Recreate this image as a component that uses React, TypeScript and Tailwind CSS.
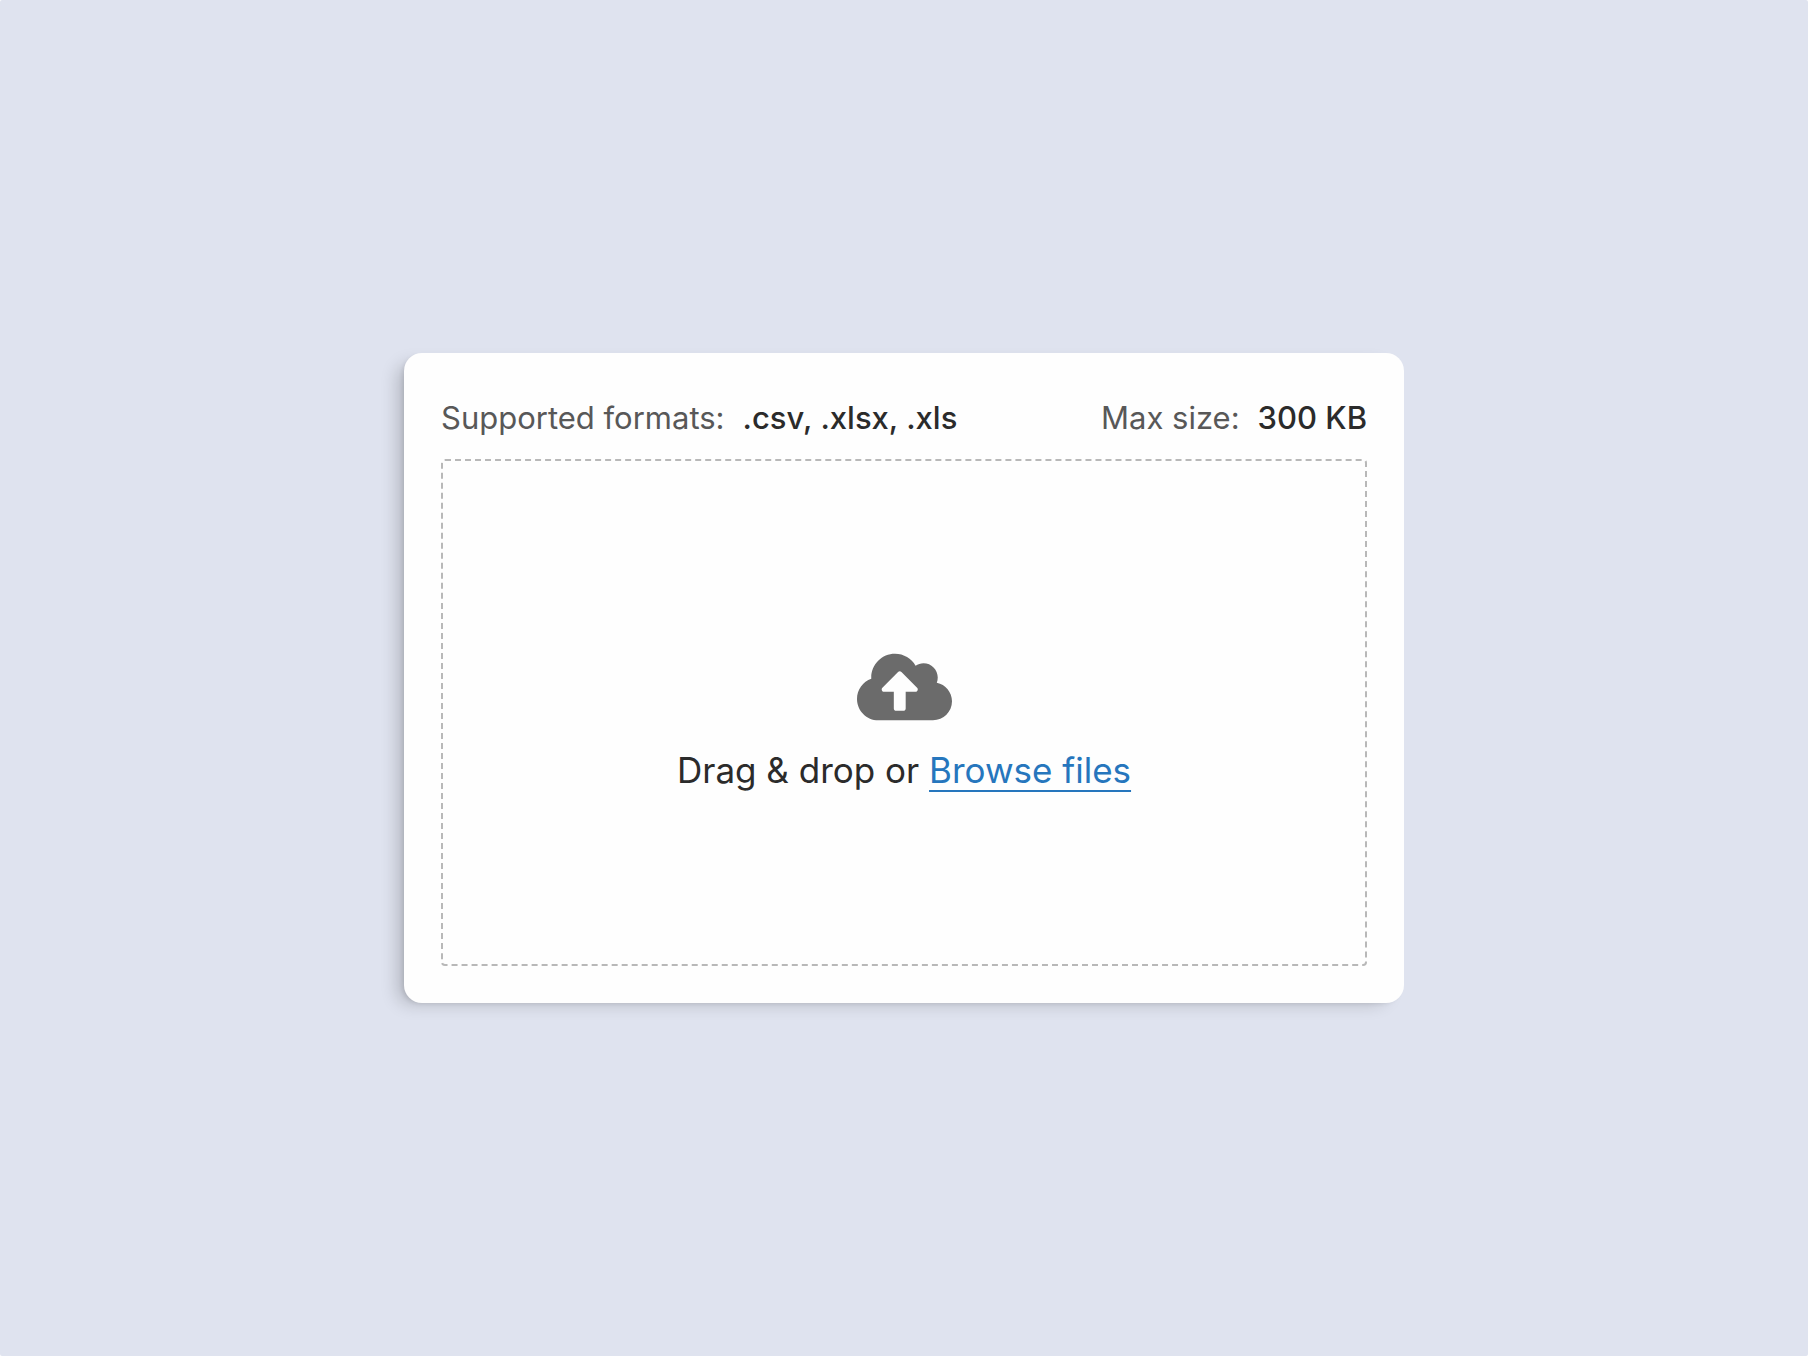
import React, { useRef } from 'react';
import { FaCloudUploadAlt } from 'react-icons/fa';

const formats = ['.csv', '.xlsx', '.xls'];

const App = () => {
    const inputRef = useRef<HTMLInputElement>(null);

    const handleBrowse = (e: React.MouseEvent) => {
        e.preventDefault();
        inputRef.current?.click();
    };

    return (
        <main className="flex min-h-screen items-center justify-center rounded-xs bg-[#dfe3ef] px-6 font-[Inter,sans-serif]">
            <section className="w-full max-w-[1000px] rounded-[18px] bg-[#fefefe] px-[37px] pt-[44px] pb-[37px] shadow-[-12px_6px_18px_-6px_rgba(0,0,0,0.2),-3px_2px_5px_-2px_rgba(0,0,0,0.1)]">
                {/* File rules */}
                <div className="flex justify-between text-[31px] leading-[42px] text-[#585858]">
                    <p className="flex gap-[18px]">
                        Supported formats:
                        <span className="font-medium text-[#2b2b2b]">{formats.join(', ')}</span>
                    </p>
                    <p className="flex gap-[18px]">
                        Max size:
                        <span className="font-medium text-[#2b2b2b]">300 KB</span>
                    </p>
                </div>

                {/* Drop zone */}
                <div className="mt-5 flex h-[507px] flex-col items-center justify-center rounded-sm border-2 border-dashed border-[#b8b8b8] pt-4">
                    <FaCloudUploadAlt className="h-[76px] w-[95px] text-[#6b6b6b]" />
                    <p className="mt-[22px] text-[35px] leading-[46px] text-[#2b2b2b]">
                        Drag &amp; drop or{' '}
                        <a
                            href="#browse"
                            onClick={handleBrowse}
                            className="text-[#2676bd] underline decoration-2 underline-offset-[7px]"
                        >
                            Browse files
                        </a>
                    </p>
                    <input ref={inputRef} type="file" accept={formats.join(',')} aria-label="Browse files" className="hidden" />
                </div>
            </section>
        </main>
    );
};

export default App;
